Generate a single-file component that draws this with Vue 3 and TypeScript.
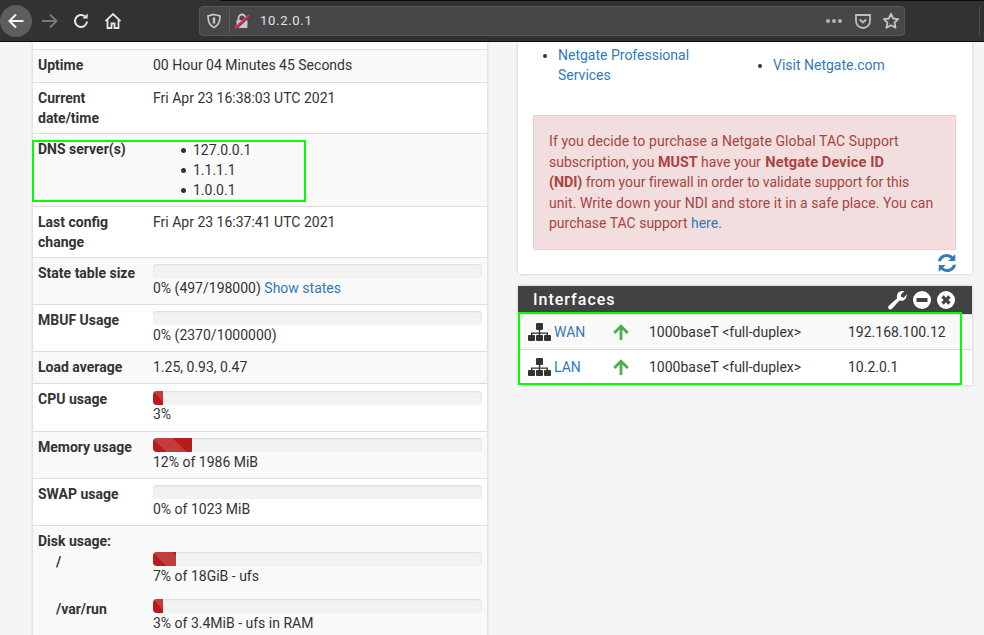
<script setup lang="ts">
interface Row { label: string; pad?: string; value?: string; lines?: string[]; bar?: number; text?: string; link?: string; barClass?: string }
const rows: Row[] = [
  { label: 'Uptime', value: '00 Hour 04 Minutes 45 Seconds', pad: 'pb7' },
  { label: 'Current date/time', value: 'Fri Apr 23 16:38:03 UTC 2021', pad: 'pb5' },
  { label: 'DNS server(s)', lines: ['127.0.0.1', '1.1.1.1', '1.0.0.1'] },
  { label: 'Last config change', value: 'Fri Apr 23 16:37:41 UTC 2021', pad: 'pb5' },
  { label: 'State table size', bar: 0, text: '0% (497/198000) ', link: 'Show states' },
  { label: 'MBUF Usage', bar: 0, text: '0% (2370/1000000)' },
  { label: 'Load average', value: '1.25, 0.93, 0.47' },
  { label: 'CPU usage', bar: 3, text: '3%', barClass: 'low', pad: 'pb7' },
  { label: 'Memory usage', bar: 12, text: '12% of 1986 MiB' },
  { label: 'SWAP usage', bar: 0, text: '0% of 1023 MiB' },
]
const disks = [
  { name: '/', bar: 7, text: '7% of 18GiB - ufs' },
  { name: '/var/run', bar: 3, text: '3% of 3.4MiB - ufs in RAM' },
]
const ifaces = [
  { name: 'WAN', media: '1000baseT <full-duplex>', ip: '192.168.100.12' },
  { name: 'LAN', media: '1000baseT <full-duplex>', ip: '10.2.0.1' },
]
</script>

<template>
  <div class="page">
    <header class="toolbar">
      <div class="tabline"></div>
      <button class="nav back">
        <svg width="18" height="18" viewBox="0 0 18 18" fill="none" stroke="#f4f4f4" stroke-width="2"><path d="M16.500 9H2.500M9 2.500 2.500 9 9 15.500" /></svg>
      </button>
      <span class="nav fwd">
        <svg width="18" height="18" viewBox="0 0 18 18" fill="none" stroke="#79797b" stroke-width="1.800"><path d="M1 9h14.500M9 2.500 15.500 9 9 15.500" /></svg>
      </span>
      <span class="nav reload">
        <svg width="18" height="18" viewBox="0 0 18 18" fill="none" stroke="#e6e6e6" stroke-width="2"><path d="M15 9.500A6 6 0 1 1 12.800 4.300" /><path d="M15.600 1.400v5.200h-5.200z" fill="#e6e6e6" stroke="none" /></svg>
      </span>
      <span class="nav home">
        <svg width="18" height="18" viewBox="0 0 18 18" fill="none" stroke="#e6e6e6" stroke-width="1.800"><path d="M1.500 9.200 9 2l7.500 7.200" /><path d="M3.500 8v8h4v-4.500h3V16h4V8" /></svg>
      </span>
      <div class="urlbar">
        <svg class="shield" width="16" height="16" viewBox="0 0 16 16" fill="none" stroke="#c8c8c9" stroke-width="1.700"><path d="M8 1.500 14 3c0 5.500-1.500 9.500-6 11.500C3.500 12.500 2 8.500 2 3z" /><path d="M8 4.500v6" stroke-width="2.400" /></svg>
        <span class="sep"></span>
        <svg class="lock" width="16" height="16" viewBox="0 0 16 16"><path d="M4.500 7V5a3.500 3.500 0 0 1 7 0v2" fill="none" stroke="#c8c8c9" stroke-width="1.800" /><rect x="2.500" y="7" width="11" height="8" rx="1" fill="#c8c8c9" /><path d="M1 16.500 15.500 3" stroke="#474749" stroke-width="2" /><path d="M1 15 15 2" stroke="#ef2a5b" stroke-width="2.200" /></svg>
        <span class="url">10.2.0.1</span>
        <span class="dots">
          <i></i><i></i><i></i>
        </span>
        <svg class="pocket" width="18" height="18" viewBox="0 0 18 18" fill="none" stroke="#bdbdbe" stroke-width="1.800"><path d="M2 3h14v6a7 7 0 0 1-14 0z" /><path d="m5.800 7.500 3.200 3 3.200-3" stroke-width="2" /></svg>
        <svg class="star" width="18" height="18" viewBox="0 0 18 18" fill="none" stroke="#c6c6c7" stroke-width="1.800" stroke-linejoin="round"><path d="m9 1.800 2.200 4.700 5 .6-3.700 3.500 1 5.100L9 13.200l-4.500 2.500 1-5.100L1.800 7.100l5-.6z" /></svg>
      </div>
      <span class="tail-sep"></span>
    </header>

    <main class="columns">
      <section class="panel left">
        <div class="stub"></div>
        <div class="table">
          <div v-for="r in rows" :key="r.label" class="row" :class="r.pad">
            <div class="label">{{ r.label }}</div>
            <div class="value">
              <template v-if="r.value">{{ r.value }}</template>
              <ul v-else-if="r.lines" class="dns">
                <li v-for="l in r.lines" :key="l">{{ l }}</li>
              </ul>
              <template v-else>
                <div class="progress" :class="r.barClass">
                  <div class="fill" :style="{ width: r.bar + '%' }"></div>
                </div>
                <div>{{ r.text }}<a v-if="r.link">{{ r.link }}</a></div>
              </template>
            </div>
          </div>
          <div class="row disk">
            <div class="disk-title">Disk usage:</div>
            <div v-for="d in disks" :key="d.name" class="disk-row">
              <div class="disk-name">{{ d.name }}</div>
              <div class="value">
                <div class="progress">
                  <div class="fill" :style="{ width: d.bar + '%' }"></div>
                </div>
                <div>{{ d.text }}</div>
              </div>
            </div>
          </div>
        </div>
        <div class="hl hl-dns"></div>
      </section>

      <div class="right">
        <section class="panel support">
          <div class="links">
            <ul class="col-a"><li><a>Netgate Professional<br />Services</a></li></ul>
            <ul class="col-b"><li><a>Visit Netgate.com</a></li></ul>
          </div>
          <div class="alert">
            <span class="ln l1">If you decide to purchase a Netgate Global TAC Support</span>
            <span class="ln">subscription, you <b>MUST</b> have your <b class="ndi">Netgate Device ID</b></span>
            <span class="ln l3"><b>(NDI)</b> from your firewall in order to validate support for this</span>
            <span class="ln l4">unit. Write down your NDI and store it in a safe place. You can</span>
            <span class="ln">purchase TAC support <a>here</a>.</span>
          </div>
          <div class="refresh">
            <svg width="20" height="20" viewBox="0 0 20 20" fill="#337ab7"><path d="M1 8.300C1.700 4 5.300 1 9.800 1c2.400 0 4.500.9 6.100 2.400L18.300 1v7h-7l2.600-2.500A6 6 0 0 0 9.800 4C7 4 4.800 5.700 4 8.300z" /><path d="M19 11.700C18.300 16 14.700 19 10.200 19c-2.400 0-4.500-.9-6.100-2.400L1.700 19v-7h7l-2.600 2.500a6 6 0 0 0 4.100 1.500c2.800 0 5-1.700 5.800-4.300z" /></svg>
          </div>
        </section>

        <section class="panel ifaces">
          <div class="if-head">
            <span class="if-title">Interfaces</span>
            <span class="if-tools">
              <svg width="19" height="19" viewBox="0 0 19 19" fill="#fff"><path d="M18.500 4.500c0 3-2.400 5.300-5.300 5.300-.6 0-1.200-.1-1.700-.3l-7.500 8.300c-.9 1-2.400 1-3.200.1-.9-.8-.9-2.300 0-3.100l8.400-7.600c-.2-.5-.3-1.100-.3-1.700C8.900 2.400 11.200 0 14.200 0c.7 0 1.300.1 1.900.4l-3.400 3.300.6 2.400 2.400.6 3.300-3.400c.3.400.5 1 .5 1.200z" /></svg>
              <svg width="18" height="18" viewBox="0 0 18 18"><circle cx="9" cy="9" r="9" fill="#fff" /><rect x="3.500" y="7" width="11" height="4" fill="#424242" /></svg>
              <svg width="18" height="18" viewBox="0 0 18 18"><circle cx="9" cy="9" r="9" fill="#fff" /><path d="m5.500 5.500 7 7m0-7-7 7" stroke="#424242" stroke-width="3.200" /></svg>
            </span>
          </div>
          <div class="if-body">
            <div v-for="i in ifaces" :key="i.name" class="if-row">
              <span class="if-name">
                <svg width="23" height="18" viewBox="0 0 23 18" fill="#333"><rect x="8" y="0" width="7" height="7" rx="1" /><path d="M10.800 7h1.400v2.500h7.800V12h-1.400v-1.200h-6.400V12h-1.400v-1.200H4.400V12H3V9.500h7.800z" /><rect x="0" y="12" width="7" height="6" rx="1" /><rect x="8" y="12" width="7" height="6" rx="1" /><rect x="16" y="12" width="7" height="6" rx="1" /></svg>
                <a>{{ i.name }}</a>
              </span>
              <svg class="up" width="16" height="16" viewBox="0 0 16 16" fill="none" stroke="#4caf50" stroke-width="2.800"><path d="M8 16V2.500M1.200 9 8 2.200 14.800 9" /></svg>
              <span class="media">{{ i.media }}</span>
              <span class="ip">{{ i.ip }}</span>
            </div>
          </div>
          <div class="hl hl-if"></div>
        </section>
      </div>
    </main>
  </div>
</template>

<style>
html, body { margin: 0; height: 100%; overflow: hidden; }
</style>

<style scoped>
.page {
  width: 984px;
  height: 635px;
  overflow: hidden;
  background: #f5f5f5;
  font-family: Roboto, "Noto Sans", sans-serif;
  font-size: 14px;
  line-height: 20px;
  color: #333;
}
a { color: #337ab7; }
ul { margin: 0; padding: 0; }

.toolbar {
  position: relative;
  height: 41px;
  background: #323234;
  border-bottom: 1px solid #0c0c0d;
  display: flex;
  align-items: center;
}
.tabline { position: absolute; top: 0; left: 220px; right: 0; height: 1px; background: #0c0c0d; }
.nav { display: flex; align-items: center; justify-content: center; flex: none; }
.back {
  width: 32px; height: 32px; padding: 0; border: 0;
  border-radius: 50%; background: #5d5d5f;
}
.fwd { width: 18px; margin-left: 9px; }
.reload { width: 18px; margin-left: 13px; }
.home { width: 18px; margin-left: 14px; }
.urlbar {
  margin-left: 77px;
  width: 706px;
  height: 30px;
  box-sizing: border-box;
  background: #474749;
  border: 1px solid #58585a;
  border-radius: 4px;
  display: flex;
  align-items: center;
  padding-left: 6px;
}
.shield { flex: none; }
.sep { width: 1px; height: 24px; background: #5c5c5e; margin: 0 4px 0 7px; }
.lock { flex: none; margin-right: 10px; }
.url { color: #e2e2e3; font-size: 13px; letter-spacing: 0.7px; flex: 1; }
.dots { display: flex; gap: 2px; margin-right: 12px; }
.dots i { width: 4px; height: 4px; border-radius: 50%; background: #b4b4b5; }
.pocket { margin-right: 10px; flex: none; }
.star { margin-right: 4px; flex: none; }
.tail-sep { position: absolute; left: 979px; top: 6px; height: 30px; width: 1px; background: #4c4c4e; }

.columns { display: flex; gap: 31px; padding-left: 33px; align-items: flex-start; }
.panel { background: #fff; box-shadow: 0 0 3px rgba(0, 0, 0, 0.2); }
.left { position: relative; width: 454px; flex: none; }
.stub { height: 7px; }
.row {
  display: flex;
  padding: 5px 0 6px 5px;
  border-top: 1px solid #ddd;
}
.row:nth-child(odd) { background: #f9f9f9; }
.pb7 { padding-bottom: 7px; }
.pb5 { padding-bottom: 5px; }
.label { width: 115px; flex: none; padding-right: 8px; box-sizing: border-box; font-weight: 700; color: #333; }
.value { flex: 1; padding-right: 5px; }
.dns { list-style: none; padding-left: 28px; margin-top: 1px; }
.dns li { display: flex; align-items: center; gap: 7px; }
.dns li::before { content: ""; width: 5px; height: 5px; border-radius: 50%; background: #333; }
.progress {
  height: 14px;
  margin-top: 1px;
  background: #f2f2f2;
  border-radius: 4px;
  box-shadow: inset 0 1px 2px rgba(0, 0, 0, 0.1);
  overflow: hidden;
}
.progress.low { margin-top: 2px; margin-bottom: -1px; }
.fill {
  height: 100%;
  background-color: #b71c1c;
  background-image: linear-gradient(45deg, rgba(255,255,255,.15) 25%, transparent 25%, transparent 50%, rgba(255,255,255,.15) 50%, rgba(255,255,255,.15) 75%, transparent 75%);
  background-size: 40px 40px;
}
.disk { display: block; }
.disk-title { font-weight: 700; }
.disk-row { display: flex; margin-bottom: 12px; }
.disk-name { width: 115px; flex: none; box-sizing: border-box; padding-left: 18px; padding-top: 1px; font-weight: 700; }

.right { width: 454px; flex: none; display: flex; flex-direction: column; gap: 12px; }
.support { height: 232px; box-sizing: border-box; padding: 3px 15px 0; }
.links { display: flex; height: 70px; }
.col-a { width: 215px; padding-left: 25px; box-sizing: border-box; flex: none; }
.col-b { padding-left: 25px; padding-top: 10px; }
.alert {
  height: 135px;
  width: 423px;
  box-sizing: border-box;
  padding: 15px 15px 0;
  background: #f2dede;
  border: 1px solid #ebccd1;
  color: #a94442;
  white-space: nowrap;
  line-height: 20.500px;
}
.ln { display: block; }
.alert b { font-size: 14.300px; }
.alert b.ndi { font-size: 14.600px; letter-spacing: 0.1px; margin-left: 1px; }
.l1 { letter-spacing: 0.08px; }
.l3 { letter-spacing: -0.06px; }
.l4 { letter-spacing: 0.05px; }
.refresh { display: flex; justify-content: flex-end; padding: 3px 0 0; }

.ifaces { position: relative; }
.if-head {
  height: 28px;
  background: #424242;
  display: flex;
  align-items: center;
  justify-content: space-between;
  padding: 0 17px 0 15px;
}
.if-title { color: #fff; font-size: 16px; font-weight: 500; letter-spacing: 1px; }
.if-tools { display: flex; align-items: center; gap: 6px; }
.if-row {
  box-sizing: border-box;
  height: 35px;
  display: flex;
  align-items: center;
  padding: 0 0 1px 10px;
  border-top: 1px solid #ddd;
}
.if-row:first-child { background: #f9f9f9; }
.if-row:last-child { height: 36px; }
.if-name { width: 85px; flex: none; display: flex; align-items: center; gap: 3px; }
.up { width: 16px; flex: none; }
.media { margin-left: 20px; width: 199px; flex: none; }

.hl { position: absolute; border: 2px solid #00ff00; box-sizing: border-box; pointer-events: none; }
.hl-dns { left: -1px; top: 98px; width: 274px; height: 62px; }
.hl-if { left: 0; top: 26px; width: 444px; height: 73px; }
</style>
